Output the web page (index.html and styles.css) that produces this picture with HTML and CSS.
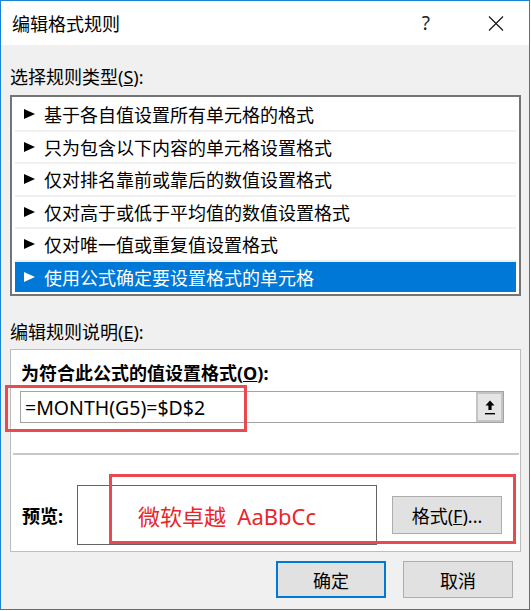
FILE: index.html
```
<!DOCTYPE html>
<html lang="zh-CN">

<head>
    <meta charset="UTF-8">
    <title>编辑格式规则</title>
    <link rel="stylesheet" href="styles.css">
</head>

<body>
    <div class="window">
        <div class="titlebar">
            <span class="title">编辑格式规则</span>
            <span class="help">?</span>
            <svg class="close" width="16" height="15" viewBox="0 0 16 15">
                <path d="M1 0.5L15 14.5M15 0.5L1 14.5" stroke="#111" stroke-width="1.1" fill="none" />
            </svg>
        </div>

        <div class="content">
            <div class="label label-type">选择规则类型(<u>S</u>):</div>
            <div class="listbox">
                <div class="item"><span class="tri"></span>基于各自值设置所有单元格的格式</div>
                <div class="item"><span class="tri"></span>只为包含以下内容的单元格设置格式</div>
                <div class="item"><span class="tri"></span>仅对排名靠前或靠后的数值设置格式</div>
                <div class="item"><span class="tri"></span>仅对高于或低于平均值的数值设置格式</div>
                <div class="item"><span class="tri"></span>仅对唯一值或重复值设置格式</div>
                <div class="item selected"><span class="tri"></span>使用公式确定要设置格式的单元格</div>
            </div>

            <div class="label label-desc">编辑规则说明(<u>E</u>):</div>
            <div class="desc">
                <div class="desc-title">为符合此公式的值设置格式(<u>O</u>):</div>
                <div class="formula">
                    <span class="formula-text">=MONTH(G5)=$D$2</span>
                    <span class="collapse">
                        <svg width="10" height="15" viewBox="0 0 10 15">
                            <path d="M5 0.5L9.5 5.5H6.6V10H3.4V5.5H0.5Z" fill="#000" />
                            <rect x="0" y="13" width="10" height="1.4" fill="#000" />
                        </svg>
                    </span>
                </div>
                <div class="sep"></div>
                <div class="preview-row">
                    <span class="preview-label">预览:</span>
                    <div class="preview-box">微软卓越&nbsp;&nbsp;AaBbCc</div>
                    <button class="btn btn-format">格式(<u>F</u>)...</button>
                </div>

                <!-- rote markeringer lagt oven på -->
                <div class="mark mark-formula"></div>
                <div class="mark mark-preview"></div>
            </div>

            <div class="actions">
                <button class="btn btn-ok">确定</button>
                <button class="btn">取消</button>
            </div>
        </div>
    </div>
</body>

</html>
```
FILE: styles.css
```
html {
    background: #fff;
}

body {
    margin: 0;
    font-family: "Noto Sans", "Noto Sans CJK SC", sans-serif;
    font-size: 18px;
    color: #000;
}

.window {
    width: 530px;
    height: 610px;
    box-sizing: border-box;
    border: 1px solid #1883d7;
    background: #f0f0f0;
    display: flex;
    flex-direction: column;
}

.titlebar {
    height: 44px;
    background: #fff;
    display: flex;
    align-items: center;
    padding-left: 11px;
    padding-right: 25px;
}

.title {
    flex: 1;
    font-size: 18px;
}

.help {
    font-size: 19px;
    color: #222;
    margin-right: 58px;
}

.close {
    display: block;
}

.content {
    padding: 0 8px 0 9px;
}

.label {
    line-height: 24px;
}

.label-type {
    margin-top: 20px;
    margin-bottom: 6px;
}

.label-desc {
    margin-top: 24px;
    margin-bottom: 5px;
}

.listbox {
    background: #fff;
    border: 2px solid #747474;
    padding: 2px 3px;
    display: flex;
    flex-direction: column;
    gap: 2px;
}

.listbox .item {
    height: 30.5px;
    display: flex;
    align-items: center;
    padding-left: 9px;
    box-shadow: 0 2px 0 #f0f0f0;
}

.listbox .item:last-child {
    box-shadow: none;
}

.tri {
    width: 0;
    height: 0;
    border-left: 11px solid #000;
    border-top: 5.5px solid transparent;
    border-bottom: 5.5px solid transparent;
    margin-right: 9px;
}

.listbox .selected {
    background: #0078d7;
    color: #fff;
}

.listbox .selected .tri {
    border-left-color: #fff;
}

.desc {
    position: relative;
    background: #fff;
    border: 1px solid #bdbdbd;
    padding: 11px 16px 6px 9px;
}

.desc-title {
    font-weight: bold;
    line-height: 24px;
    padding-left: 1px;
}

.formula {
    margin-top: 6px;
    height: 32px;
    box-sizing: border-box;
    border: 1px solid #a3a3a3;
    display: flex;
    align-items: center;
}

.formula-text {
    flex: 1;
    padding-left: 4px;
    font-size: 19.5px;
    font-family: "Noto Sans", sans-serif;
}

.collapse {
    width: 27px;
    height: 100%;
    box-sizing: border-box;
    background: #e5e5e5;
    border: 2px solid #c4c4c4;
    display: flex;
    align-items: center;
    justify-content: center;
}

.collapse svg {
    display: block;
}

.sep {
    height: 2px;
    background: #c8c8c8;
    margin: 30px -15px 0 -7px;
}

.preview-row {
    margin-top: 30px;
    display: flex;
    align-items: center;
}

.preview-label {
    width: 55px;
    padding-left: 2px;
    font-weight: bold;
}

.preview-box {
    width: 300px;
    height: 60px;
    box-sizing: border-box;
    border: 1px solid #646464;
    display: flex;
    align-items: center;
    justify-content: center;
    color: #e8262b;
    font-size: 22px;
}

.btn {
    font-family: inherit;
    font-size: 18px;
    color: #000;
    width: 110px;
    background: #e1e1e1;
    border: 1px solid #adadad;
    padding: 0;
}

.btn-format {
    height: 38px;
    margin-left: 15px;
}

.mark {
    position: absolute;
    border: 3px solid #e84a4e;
    box-sizing: border-box;
}

.mark-formula {
    left: -6px;
    top: 35px;
    width: 242px;
    height: 47px;
}

.mark-preview {
    left: 98px;
    top: 124px;
    width: 407px;
    height: 70px;
}

.actions {
    margin-top: 9px;
    display: flex;
    justify-content: flex-end;
    gap: 17px;
    padding-right: 8px;
}

.actions .btn {
    height: 37px;
}

.btn-ok {
    border: 2px solid #0078d7;
}
```
